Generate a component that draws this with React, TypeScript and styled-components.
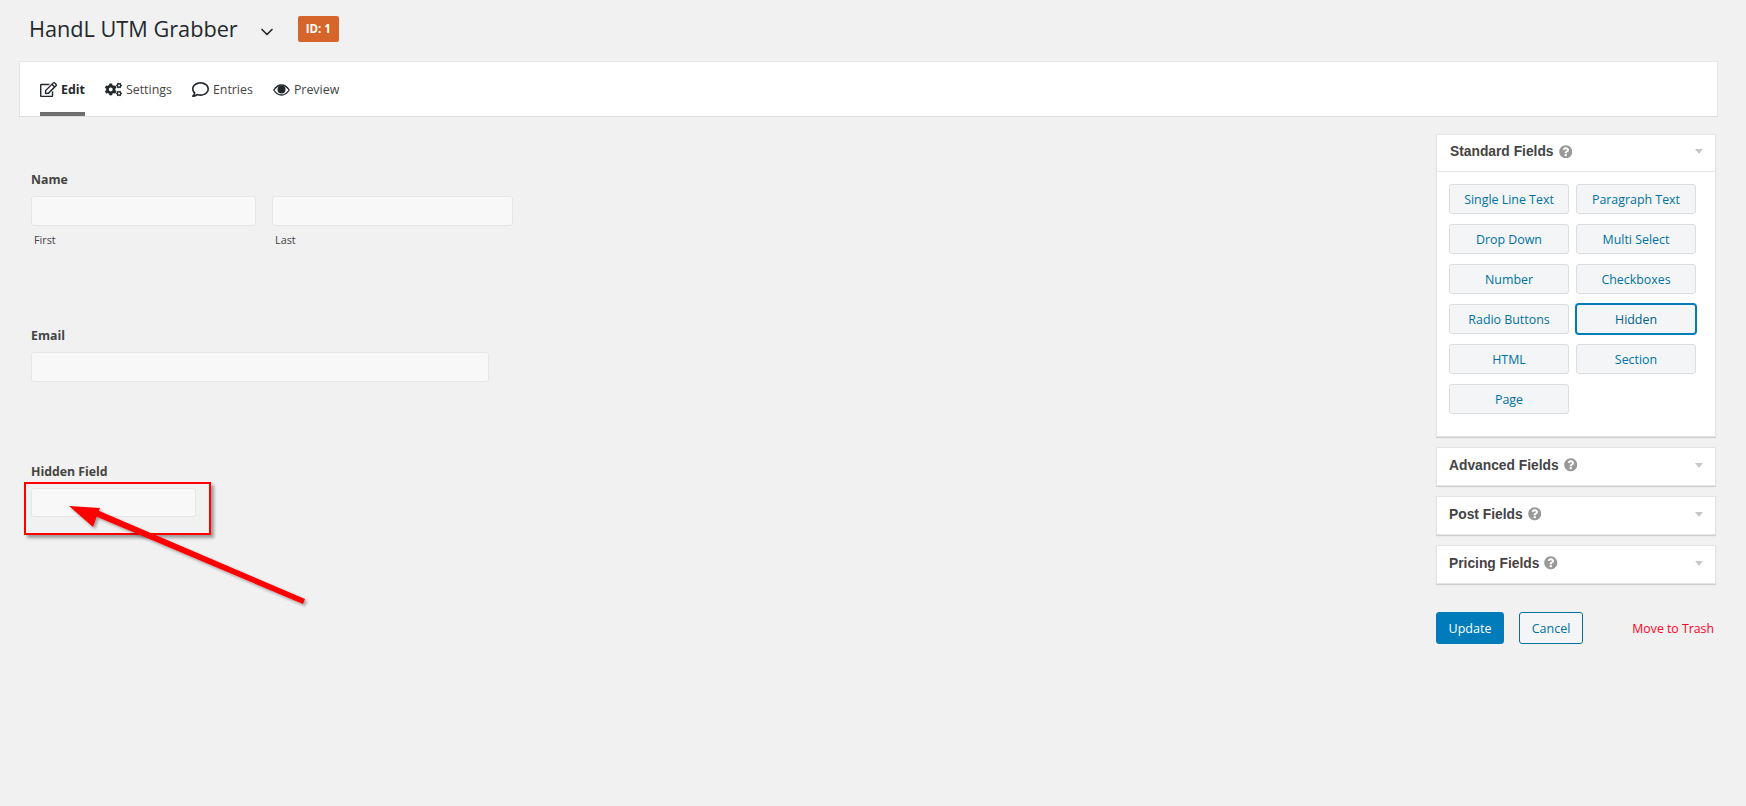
import styled, { createGlobalStyle } from 'styled-components';
import { FaRegEdit, FaCogs, FaRegComment, FaQuestionCircle } from 'react-icons/fa';
import { FiChevronDown } from 'react-icons/fi';

const GlobalStyle = createGlobalStyle`
  html, body {
    margin: 0;
    background: #f1f1f1;
    font-family: "Open Sans", "Noto Sans", sans-serif;
    color: #444;
  }
`;

const Page = styled.div`
  position: relative;
  width: 1746px;
  height: 806px;
  overflow: hidden;
`;

const TitleRow = styled.div`
  display: flex;
  align-items: center;
  height: 26px;
  padding: 16px 0 0 29px;
`;

const Title = styled.h1`
  margin: 0;
  font-size: 21.7px;
  font-weight: 400;
  line-height: 26px;
  color: #23282d;
`;

const TitleCaret = styled.span`
  display: flex;
  margin-left: 19px;
  margin-top: 5px;
  color: #23282d;
  font-size: 20px;
`;

const IdBadge = styled.span`
  width: 41px;
  height: 26px;
  margin-left: 21px;
  border-radius: 2px;
  background: #d6652c;
  color: #fff;
  font-size: 11.5px;
  font-weight: 700;
  line-height: 26px;
  text-align: center;
`;

const Toolbar = styled.nav`
  display: flex;
  gap: 20px;
  height: 56px;
  margin: 19px 28px 0 19px;
  padding: 0 20px;
  box-sizing: border-box;
  background: #fff;
  border: 1px solid #e5e5e5;
  border-bottom-color: #ddd;
`;

const Tab = styled.a<{ $active?: boolean }>`
  display: flex;
  align-items: center;
  gap: 4px;
  height: 54px;
  padding-top: 5px;
  box-sizing: border-box;
  border-bottom: 4px solid ${({ $active }) => ($active ? '#6f6f6f' : 'transparent')};
  color: ${({ $active }) => ($active ? '#23282d' : '#444')};
  font-size: 12.4px;
  font-weight: ${({ $active }) => ($active ? 700 : 400)};

  svg {
    font-size: 17px;
    color: #23282d;
  }
`;

const Content = styled.div`
  display: flex;
  justify-content: space-between;
  padding: 17px 30px 0 31px;
`;

const FormColumn = styled.div`
  display: flex;
  flex-direction: column;
  padding-top: 36px;
`;

const Field = styled.div<{ $gap: number }>`
  margin-bottom: ${({ $gap }) => $gap}px;
`;

const FieldLabel = styled.label`
  display: block;
  height: 20px;
  margin-bottom: 6px;
  font-size: 12.3px;
  font-weight: 700;
  line-height: 20px;
  color: #444;
`;

const InputRow = styled.div`
  display: flex;
  gap: 16px;
`;

const InputCol = styled.div`
  display: flex;
  flex-direction: column;
`;

const TextBox = styled.div<{ $width: number; $height?: number }>`
  width: ${({ $width }) => $width}px;
  height: ${({ $height }) => $height ?? 30}px;
  box-sizing: border-box;
  background: #f8f8f8;
  border: 1px solid #e6e6e6;
  border-radius: 3px;
`;

const SubLabel = styled.span`
  height: 16px;
  margin: 6px 0 0 3px;
  font-size: 10.8px;
  line-height: 16px;
  color: #444;
`;

const Sidebar = styled.aside`
  display: flex;
  flex-direction: column;
  gap: 10px;
  width: 280px;
`;

const Panel = styled.section`
  box-sizing: border-box;
  background: #fff;
  border: 1px solid #e5e5e5;
  box-shadow: 0 1px 1px rgba(0, 0, 0, 0.14);
`;

const PanelHeader = styled.header<{ $open?: boolean }>`
  display: flex;
  align-items: center;
  height: 37px;
  box-sizing: border-box;
  padding: 0 12px 3px ${({ $open }) => ($open ? 13 : 12)}px;
  border-bottom: ${({ $open }) => ($open ? '1px solid #e5e5e5' : 'none')};
  font-family: "Liberation Sans", Arial, sans-serif;
  font-size: 13.8px;
  font-weight: 700;
  color: #444;

  svg {
    margin-left: 5px;
    font-size: 13.5px;
    color: #999;
  }
`;

const PanelCaret = styled.i`
  width: 0;
  height: 0;
  margin-left: auto;
  border-left: 4px solid transparent;
  border-right: 4px solid transparent;
  border-top: 5px solid #c8c8c8;
`;

const ButtonGrid = styled.div`
  display: grid;
  grid-template-columns: 120px 120px;
  grid-auto-rows: 30px;
  gap: 10px 7px;
  padding: 12px 0 22px 12px;
`;

const FieldButton = styled.button<{ $focused?: boolean }>`
  width: 100%;
  height: 100%;
  padding: 0;
  background: #f3f5f6;
  border: 1px solid ${({ $focused }) => ($focused ? '#007cba' : '#dcdcde')};
  border-radius: 3px;
  box-shadow: ${({ $focused }) => ($focused ? '0 0 0 1px #007cba' : 'none')};
  color: ${({ $focused }) => ($focused ? '#016087' : '#0071a1')};
  font-family: inherit;
  font-size: 12.4px;
`;

const Actions = styled.div`
  display: flex;
  align-items: center;
  margin: 18px 2px 0 0;
`;

const UpdateButton = styled.button`
  width: 68px;
  height: 32px;
  padding: 0;
  background: #007cba;
  border: 1px solid #007cba;
  border-radius: 3px;
  color: #fff;
  font-family: inherit;
  font-size: 12.5px;
`;

const CancelButton = styled.button`
  width: 64px;
  height: 32px;
  margin-left: 15px;
  padding: 0;
  background: #f3f5f6;
  border: 1px solid #0071a1;
  border-radius: 3px;
  color: #0071a1;
  font-family: inherit;
  font-size: 12.5px;
`;

const TrashLink = styled.a`
  margin-left: auto;
  color: #ff0028;
  font-size: 12.3px;
`;

const HighlightBox = styled.div`
  position: absolute;
  left: 24px;
  top: 482px;
  width: 187px;
  height: 53px;
  box-sizing: border-box;
  border: 2px solid #ff0000;
  box-shadow: 3px 3px 3px rgba(0, 0, 0, 0.35);
`;

const ArrowLayer = styled.svg`
  position: absolute;
  left: 0;
  top: 0;
  width: 1746px;
  height: 806px;
  pointer-events: none;
`;

const fieldButtons = [
  'Single Line Text',
  'Paragraph Text',
  'Drop Down',
  'Multi Select',
  'Number',
  'Checkboxes',
  'Radio Buttons',
  'Hidden',
  'HTML',
  'Section',
  'Page',
];

// font awesome 4 style eye, the packaged ones have a smaller pupil
const EyeIcon = () => (
  <svg width="17" height="12" viewBox="0 0 17 12">
    <path d="M.8 6C3 2.6 5.6 1 8.5 1s5.500 1.600 7.700 5c-2.200 3.400-4.800 5-7.700 5S3 9.400.8 6Z" fill="none" stroke="currentColor" strokeWidth="1.3" />
    <circle cx="8.500" cy="5.600" r="4" fill="currentColor" />
  </svg>
);

const App = () => (
  <Page>
    <GlobalStyle />
    <TitleRow>
      <Title>HandL UTM Grabber</Title>
      <TitleCaret>
        <FiChevronDown />
      </TitleCaret>
      <IdBadge>ID: 1</IdBadge>
    </TitleRow>
    <Toolbar>
      <Tab $active>
        <FaRegEdit />
        Edit
      </Tab>
      <Tab>
        <FaCogs />
        Settings
      </Tab>
      <Tab>
        <FaRegComment />
        Entries
      </Tab>
      <Tab>
        <EyeIcon />
        Preview
      </Tab>
    </Toolbar>
    <Content>
      <FormColumn>
        <Field $gap={78}>
          <FieldLabel>Name</FieldLabel>
          <InputRow>
            <InputCol>
              <TextBox $width={225} />
              <SubLabel>First</SubLabel>
            </InputCol>
            <InputCol>
              <TextBox $width={241} />
              <SubLabel>Last</SubLabel>
            </InputCol>
          </InputRow>
        </Field>
        <Field $gap={80}>
          <FieldLabel>Email</FieldLabel>
          <TextBox $width={458} />
        </Field>
        <Field $gap={0}>
          <FieldLabel>Hidden Field</FieldLabel>
          <TextBox $width={165} $height={29} />
        </Field>
      </FormColumn>
      <Sidebar>
        <Panel>
          <PanelHeader $open>
            Standard Fields <FaQuestionCircle />
            <PanelCaret />
          </PanelHeader>
          <ButtonGrid>
            {fieldButtons.map((name) => (
              <FieldButton key={name} $focused={name === 'Hidden'}>
                {name}
              </FieldButton>
            ))}
          </ButtonGrid>
        </Panel>
        {['Advanced Fields', 'Post Fields', 'Pricing Fields'].map((name) => (
          <Panel key={name}>
            <PanelHeader>
              {name} <FaQuestionCircle />
              <PanelCaret />
            </PanelHeader>
          </Panel>
        ))}
        <Actions>
          <UpdateButton>Update</UpdateButton>
          <CancelButton>Cancel</CancelButton>
          <TrashLink>Move to Trash</TrashLink>
        </Actions>
      </Sidebar>
    </Content>
    <HighlightBox />
    <ArrowLayer viewBox="0 0 1746 806">
      <defs>
        <filter id="arrowShadow" x="-10%" y="-10%" width="120%" height="130%">
          <feDropShadow dx="2" dy="2" stdDeviation="1.500" floodColor="#000" floodOpacity="0.35" />
        </filter>
      </defs>
      <g filter="url(#arrowShadow)" fill="#ff0000">
        <polygon points="303,604 95,516 97,510 305,599" />
        <polygon points="69,506 100,508 93,527" />
      </g>
    </ArrowLayer>
  </Page>
);

export default App;
